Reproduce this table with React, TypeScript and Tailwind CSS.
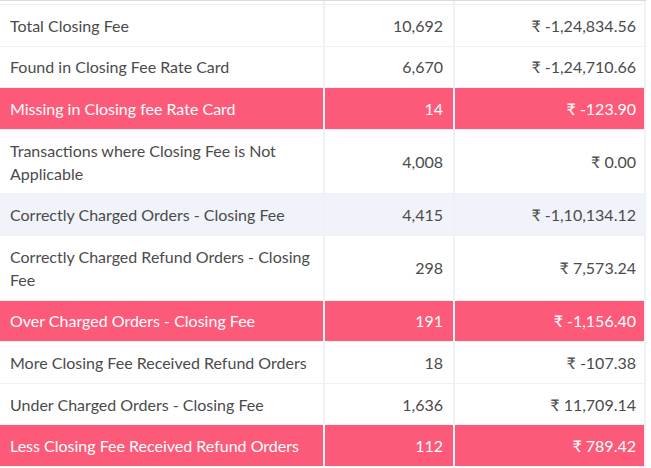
import React from "react";

type Row = { label: string; count: string; amount: string; tone?: "pink" | "muted" };

const rows: Row[] = [
  { label: "Total Closing Fee", count: "10,692", amount: "₹ -1,24,834.56" },
  { label: "Found in Closing Fee Rate Card", count: "6,670", amount: "₹ -1,24,710.66" },
  { label: "Missing in Closing fee Rate Card", count: "14", amount: "₹ -123.90", tone: "pink" },
  { label: "Transactions where Closing Fee is Not Applicable", count: "4,008", amount: "₹ 0.00" },
  { label: "Correctly Charged Orders - Closing Fee", count: "4,415", amount: "₹ -1,10,134.12", tone: "muted" },
  { label: "Correctly Charged Refund Orders - Closing Fee", count: "298", amount: "₹ 7,573.24" },
  { label: "Over Charged Orders - Closing Fee", count: "191", amount: "₹ -1,156.40", tone: "pink" },
  { label: "More Closing Fee Received Refund Orders", count: "18", amount: "₹ -107.38" },
  { label: "Under Charged Orders - Closing Fee", count: "1,636", amount: "₹ 11,709.14" },
  { label: "Less Closing Fee Received Refund Orders", count: "112", amount: "₹ 789.42", tone: "pink" },
];

export default function App() {
  return (
    <div
      className="w-[651px] h-[468px] overflow-hidden bg-white"
      style={{ fontFamily: "Lato, 'Noto Sans', sans-serif" }}
    >
      <div className="w-[646px] border-t border-[#dadada]">
        <div className="h-[3px] border-r-2 border-[#eef1f6] flex">
          <div className="w-[325px] border-r-2 border-[#eef1f6]" />
          <div className="w-[130px] border-r-2 border-[#eef1f6]" />
        </div>
        <div className="border-t border-[#eef1f6]">
          {rows.map((r, i) => {
            const bg =
              r.tone === "pink"
                ? "bg-[#fd5a7a] text-white"
                : r.tone === "muted"
                ? "bg-[#f0f3f9] text-[#4b4b4b]"
                : "bg-white text-[#4b4b4b]";
            const sep = r.tone === "pink" ? "border-[#f3f4f8]" : "border-[#eef1f6]";
            return (
              <div
                key={i}
                className={`grid grid-cols-[325px_130px_191px] border-b border-[#eef1f6] text-[16px] leading-[23px] ${bg}`}
              >
                <div className={`px-[10px] py-[8.8px] border-r-2 ${sep}`}>{r.label}</div>
                <div className={`px-[10px] py-[8.8px] text-right border-r-2 ${sep} flex items-center justify-end`}>
                  {r.count}
                </div>
                <div className="pl-[10px] pr-[8px] py-[8.8px] text-right border-r-2 border-[#eef1f6] flex items-center justify-end">
                  {r.amount}
                </div>
              </div>
            );
          })}
        </div>
      </div>
    </div>
  );
}
